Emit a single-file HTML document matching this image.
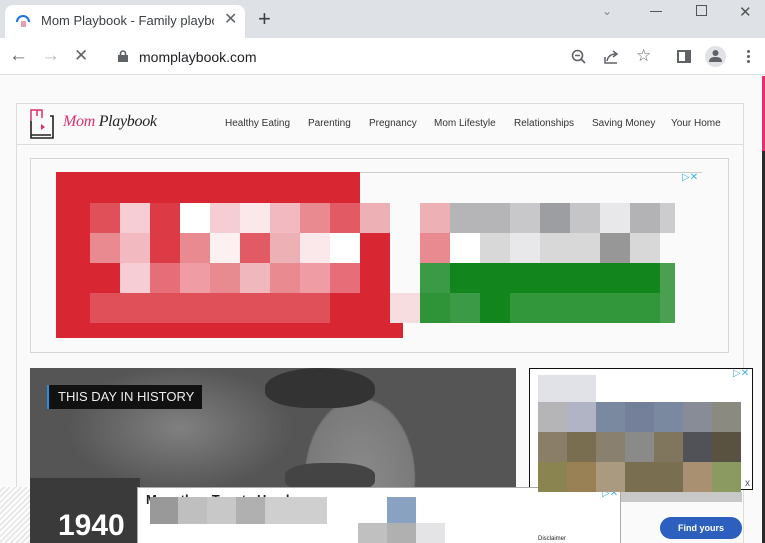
<!DOCTYPE html><html><head><style>
*{margin:0;padding:0;box-sizing:border-box}
html,body{width:765px;height:543px;overflow:hidden}
body{background:#fafafa;font-family:"Liberation Sans",sans-serif;position:relative}
.a{position:absolute}
</style></head><body>
<!-- tab bar -->
<div class="a" style="left:0;top:0;width:765px;height:38px;background:#dee1e6"></div>
<div class="a" style="left:5px;top:5px;width:240px;height:34px;background:#fff;border-radius:8px 8px 0 0"></div>
<svg class="a" style="left:15px;top:13px" width="16" height="16"><path d="M2 9 A6 6 0 0 1 14 9" stroke="#1a73e8" stroke-width="2" fill="none"/><rect x="6" y="8" width="5" height="6" fill="#e8a0b0"/></svg>
<div class="a" style="left:41px;top:13px;font-size:13px;color:#3c4043;white-space:nowrap;width:173px;overflow:hidden">Mom Playbook - Family playbook</div>
<div class="a" style="left:224px;top:9px;font-size:16px;color:#5f6368">✕</div>
<div class="a" style="left:258px;top:6px;font-size:22px;color:#3c4043">+</div>
<div class="a" style="left:602px;top:4px;font-size:12px;color:#888">⌄</div>
<div class="a" style="left:650px;top:11px;width:12px;height:1px;background:#555"></div>
<div class="a" style="left:696px;top:5px;width:11px;height:11px;border:1px solid #555"></div>
<div class="a" style="left:739px;top:3px;font-size:15px;color:#555">✕</div>
<!-- toolbar -->
<div class="a" style="left:0;top:38px;width:765px;height:37px;background:#fff;border-bottom:1px solid #dadce0"></div>
<div class="a" style="left:9px;top:45px;font-size:19px;color:#5f6368">←</div>
<div class="a" style="left:41px;top:45px;font-size:19px;color:#bbb">→</div>
<div class="a" style="left:74px;top:46px;font-size:17px;color:#5f6368">✕</div>
<svg class="a" style="left:118px;top:50px" width="10" height="12"><rect x="0" y="5" width="10" height="7" fill="#5f6368"/><path d="M2.5 5V3.5a2.5 2.5 0 0 1 5 0V5" stroke="#5f6368" stroke-width="1.6" fill="none"/></svg>
<div class="a" style="left:139px;top:49px;font-size:14px;color:#202124">momplaybook.com</div>
<svg class="a" style="left:571px;top:49px" width="16" height="16"><circle cx="6.5" cy="6.5" r="5" stroke="#5f6368" stroke-width="1.6" fill="none"/><path d="M4 6.5h5M10 10l4 4" stroke="#5f6368" stroke-width="1.6"/></svg>
<svg class="a" style="left:604px;top:49px" width="16" height="16"><path d="M1 8v6h12M3 12c1-5 4-7 9-7M9 2l4 3-4 3" stroke="#5f6368" stroke-width="1.5" fill="none"/></svg>
<div class="a" style="left:636px;top:46px;font-size:17px;color:#5f6368">☆</div>
<div class="a" style="left:677px;top:50px;width:14px;height:13px;border:2px solid #5f6368;border-right-width:6px"></div>
<div class="a" style="left:705px;top:46px;width:21px;height:21px;border-radius:50%;background:#e0e2e6"></div>
<svg class="a" style="left:709px;top:49px" width="13" height="14"><circle cx="6.5" cy="4" r="3" fill="#5f6368"/><path d="M0 13c0-4 3-5 6.5-5s6.5 1 6.5 5z" fill="#5f6368"/></svg>
<div class="a" style="left:747px;top:50px;width:3px;height:3px;background:#5f6368;border-radius:50%;box-shadow:0 5px #5f6368,0 10px #5f6368"></div>
<!-- scrollbar -->
<div class="a" style="left:762px;top:76px;width:3px;height:467px;background:#2a2a2a"></div>
<div class="a" style="left:762px;top:76px;width:3px;height:75px;background:#e0306a"></div>
<!-- header -->
<div class="a" style="left:16px;top:103px;width:728px;height:440px;border:1px solid #ddd;border-bottom:none;background:#fafafa"></div>
<div class="a" style="left:16px;top:144px;width:728px;height:1px;background:#ddd"></div>
<svg class="a" style="left:28px;top:107px" width="30" height="34"><path d="M3 14V3h6v6M9 3h5v8" stroke="#e0306a" stroke-width="1.5" fill="none"/><path d="M3 14v17h22V9h-3M3 28h20" stroke="#222" stroke-width="1.6" fill="none"/><path d="M13 17l4 3-4 3z" fill="#e0306a"/></svg>
<div class="a" style="left:63px;top:113px;font-size:16px;color:#e0306a;font-family:'Liberation Serif',serif;font-style:italic;letter-spacing:-.3px">Mom <span style="color:#222">Playbook</span></div>
<div class="a" style="left:225px;top:118px;font-size:10px;color:#333;white-space:nowrap">
<span class="a" style="left:0">Healthy Eating</span><span class="a" style="left:83px">Parenting</span><span class="a" style="left:144px">Pregnancy</span><span class="a" style="left:209px">Mom Lifestyle</span><span class="a" style="left:289px">Relationships</span><span class="a" style="left:367px">Saving Money</span><span class="a" style="left:446px">Your Home</span></div>
<!-- top ad -->
<div class="a" style="left:30px;top:158px;width:699px;height:195px;border:1px solid #d6d6d6;background:#fafafa"></div>
<div class="a" style="left:360px;top:172px;width:342px;height:1px;background:#ccc"></div>
<div class="a" style="left:682px;top:172px;font-size:10px;color:#3ab0e0">▷✕</div>
<div class="a" style="left:56px;top:172px;width:304px;height:166px;background:#d82632"></div>
<div class="a" style="left:360px;top:233px;width:30px;height:105px;background:#d82632"></div>
<div class="a" style="left:390px;top:323px;width:13px;height:15px;background:#d82632"></div>
<!-- history -->
<div class="a" style="left:30px;top:368px;width:486px;height:175px;background:#5e5e5e;overflow:hidden">
<div class="a" style="left:0;top:0;width:486px;height:175px;background:radial-gradient(ellipse 90px 130px at 330px 110px,#8a8a8a 0,#7a7a7a 60%,transparent 62%),radial-gradient(ellipse 160px 90px at 150px 60px,#808080 0,transparent 70%),#555"></div>
<div class="a" style="left:235px;top:0;width:110px;height:40px;background:#333;border-radius:50% 50% 40% 40%"></div>
<div class="a" style="left:255px;top:95px;width:90px;height:30px;background:#444;border-radius:40%"></div>
<div class="a" style="left:0;top:110px;width:110px;height:65px;background:#3a3a3a"></div>
</div>
<div class="a" style="left:47px;top:385px;width:155px;height:24px;background:#111;border-left:2px solid #2a8ee0;color:#eee;font-size:13px;padding:4px 9px;white-space:nowrap">THIS DAY IN HISTORY</div>
<div class="a" style="left:58px;top:509px;font-size:30px;font-weight:bold;color:#fff">1940</div>
<!-- right ad -->
<div class="a" style="left:529px;top:368px;width:224px;height:122px;border:1px solid #111;background:#fff"></div>
<div class="a" style="left:538px;top:492px;width:204px;height:10px;background:#c8c8c8"></div>
<div class="a" style="left:733px;top:368px;font-size:10px;color:#3ab0e0">▷✕</div>
<div class="a" style="left:745px;top:478px;font-size:10px;color:#555">x</div>
<div class="a" style="left:660px;top:517px;width:82px;height:22px;background:#2d5fbf;border-radius:11px;color:#fff;font-size:9px;font-weight:bold;text-align:center;line-height:22px">Find yours</div>
<!-- bottom ad -->
<div class="a" style="left:0;top:487px;width:30px;height:56px;background:repeating-linear-gradient(135deg,#fff 0 2px,#e8e8e8 2px 4px)"></div>
<div class="a" style="left:137px;top:487px;width:484px;height:56px;background:#fff;border:1px solid #aaa;border-bottom:none"></div>
<div class="a" style="left:146px;top:492px;font-size:13px;font-weight:bold;color:#222">More than Toyota Hando</div>
<div class="a" style="left:602px;top:488px;font-size:10px;color:#3ab0e0">▷✕</div>
<div class="a" style="left:538px;top:536px;font-size:6px;color:#222">Disclaimer</div>
<div id="g"></div>
<script>
var d=[
[203,[[90,"#e05058"],[120,"#f5cdd2"],[150,"#dc3a44"],[180,"#fff"],[210,"#f5cdd2"],[240,"#fbe8ea"],[270,"#f2bac0"],[300,"#e88a90"],[330,"#e25a64"],[360,"#edb0b5"],[420,"#edb0b5"],[450,"#b5b5b7"],[480,"#b5b5b7"],[510,"#c8c8ca"],[540,"#9d9ea2"],[570,"#c5c5c7"],[600,"#e8e8ea"],[630,"#b3b3b5"],[660,"#ccccce",15]]],
[233,[[90,"#e88a90"],[120,"#f2bac0"],[150,"#dc3a44"],[180,"#e88a90"],[210,"#fcf0f1"],[240,"#e25a64"],[270,"#edb0b5"],[300,"#fbe8ea"],[330,"#fff"],[420,"#e88a90"],[450,"#fff"],[480,"#d8d8d8"],[510,"#e8e8ea"],[540,"#d8d8d8"],[570,"#d8d8d8"],[600,"#979797"],[630,"#d8d8d8"]]],
[263,[[120,"#f5cdd2"],[150,"#e56e78"],[180,"#ef9ca4"],[210,"#e88a90"],[240,"#f0b8bd"],[270,"#e88a90"],[300,"#ef9ca4"],[330,"#e56e78"],[420,"#3a9a45"],[450,"#12861d",210],[660,"#4aa050",15]]],
[293,[[90,"#e05058",240],[390,"#f8dde0"],[420,"#2f9438"],[450,"#3a9a45"],[480,"#12861d"],[510,"#32963a",150],[660,"#4aa050",15]]]];
var h="";d.forEach(function(r){r[1].forEach(function(c){h+='<div class="a" style="left:'+c[0]+'px;top:'+r[0]+'px;width:'+(c[2]||30)+'px;height:30px;background:'+c[1]+'"></div>'})});
var b=[[538,375,"#e0e2e8",29,27],[567,375,"#e0e2e8",29,27],[538,402,"#b5b5b8"],[567,402,"#b0b4c4"],[596,402,"#7a88a0"],[625,402,"#74809a"],[654,402,"#7a88a0"],[683,402,"#888c96"],[712,402,"#8a8a80"],[538,432,"#8a7e68"],[567,432,"#7a6e50"],[596,432,"#8a8070"],[625,432,"#8a8a88"],[654,432,"#80765e"],[683,432,"#505258"],[712,432,"#5a5240"],[538,462,"#8a8450"],[567,462,"#9a8055"],[596,462,"#aa9a80"],[625,462,"#7a6e50",58],[683,462,"#a89070"],[712,462,"#8a9a60"],
[150,497,"#999",28,27],[178,497,"#c0bfbf",29,27],[207,497,"#c8c8c8",29,27],[236,497,"#b0b0b0",29,27],[265,497,"#cfcfcf",29,27],[294,497,"#cfcfcf",33,27],[387,497,"#8aa2c2",29,27],[358,523,"#c0c0c0",29,20],[387,523,"#b0b0b0",29,20],[416,523,"#e4e4e6",29,20]];
b.forEach(function(c){h+='<div class="a" style="left:'+c[0]+'px;top:'+c[1]+'px;width:'+(c[3]||29)+'px;height:'+(c[4]||30)+'px;background:'+c[2]+'"></div>'});
document.getElementById("g").innerHTML=h;
</script>
</body></html>
